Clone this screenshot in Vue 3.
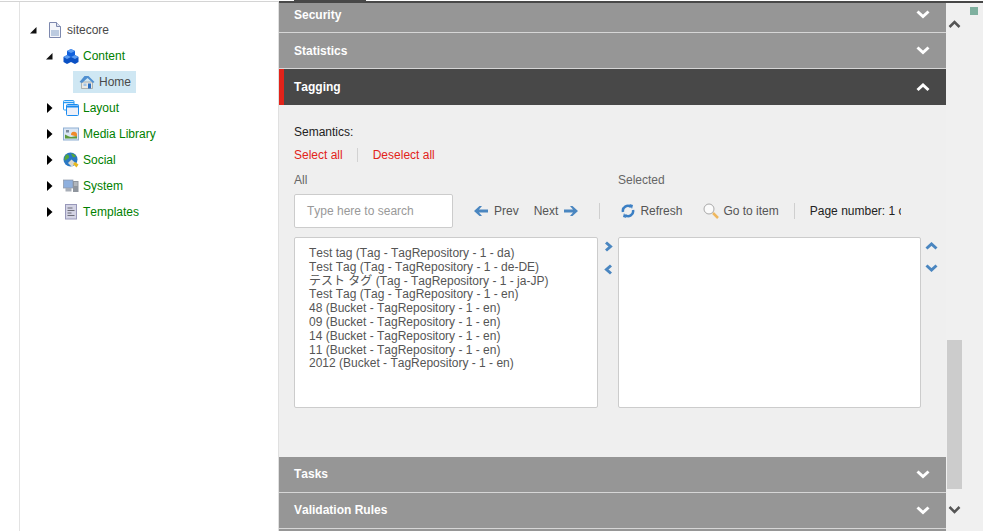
<template>
  <div class="page">
    <!-- content tree -->
    <aside class="tree-pane">
      <div class="gutter"></div>
      <div class="tree">
        <div class="node root">
          <svg class="twisty" viewBox="0 0 17 26"><path d="M0 16.500h6.500v-6.500z" fill="#111" /></svg>
          <svg class="icon" viewBox="0 0 16 16">
            <path d="M2.500 .5h7l4 4v11h-11z" fill="#f4f6fa" stroke="#7d88ae" />
            <path d="M9.500 .5v4h4" fill="#dfe4f0" stroke="#7d88ae" />
            <rect x="4" y="8" width="8" height="6" fill="#bccbe0" />
          </svg>
          <span class="label plain">sitecore</span>
        </div>
        <div class="node">
          <svg class="twisty" viewBox="0 0 17 26"><path d="M0 16.500h6.500v-6.500z" fill="#111" /></svg>
          <svg class="icon" viewBox="0 0 16 16">
            <path d="M4 3l4-2 4 2v5l-4 2-4-2z" fill="#1160dc" />
            <path d="M4 3l4 2 4-2-4-2z" fill="#5c9cf2" />
            <path d="M.5 9l3.500-2 4 2v5l-4 2-3.500-2z" fill="#0a50c4" />
            <path d="M.5 9l3.500 2 4-2-4-2z" fill="#5c9cf2" />
            <path d="M8 9l4-2 3.500 2v5l-3.500 2-4-2z" fill="#0a50c4" />
            <path d="M8 9l4 2 3.500-2-3.500-2z" fill="#5c9cf2" />
          </svg>
          <span class="label">Content</span>
        </div>
        <div class="node home-row">
          <div class="selected">
            <svg class="icon" viewBox="0 0 16 16">
              <path d="M2.500 8h11v6.500h-11z" fill="#e9e9e4" stroke="#9a9a94" stroke-width=".7" />
              <path d="M.5 8l5-6h4l6 6-1.500 1-5.500-5-5.500 5z" fill="#4f8fd0" />
              <rect x="9" y="9.500" width="3" height="5" fill="#2b6fc0" />
              <rect x="4.500" y="9.500" width="3" height="2.500" fill="#9fc4e8" />
            </svg>
            <span class="label plain">Home</span>
          </div>
        </div>
        <div v-for="item in collapsed" :key="item" class="node">
          <svg class="twisty" viewBox="0 0 17 26"><path d="M1 8l5.500 5-5.500 5z" fill="#000" /></svg>
          <svg v-if="item === 'Layout'" class="icon" viewBox="0 0 16 16">
            <rect x=".5" y=".5" width="10.500" height="9.500" rx="1" fill="#fff" stroke="#2b9af3" />
            <path d="M.5 2.500h10.500" stroke="#2b9af3" stroke-width="1.500" />
            <rect x="3.500" y="4.500" width="12" height="11" rx="1" fill="#eef0f8" stroke="#1b8cf0" />
            <path d="M3.500 6.500h12" stroke="#1b8cf0" stroke-width="2" />
          </svg>
          <svg v-else-if="item === 'Media Library'" class="icon" viewBox="0 0 16 16">
            <rect x=".5" y="2" width="15" height="12" fill="#dbe6f4" stroke="#8fb0d4" />
            <path d="M2 12.500v-4l4 2 2 .5 6-1v2.500z" fill="#5c9a3c" />
            <path d="M8 9a3 3 0 0 1 6-.5v2z" fill="#f08a2c" />
            <rect x="3" y="4" width="3" height="2.500" fill="#7b8a9c" />
          </svg>
          <svg v-else-if="item === 'Social'" class="icon" viewBox="0 0 16 16">
            <circle cx="7.500" cy="7.500" r="7" fill="#2a78c4" />
            <path d="M3 3c2-1 3 0 3 2s-3 2-4 4c-1-2-.5-4 1-6zM8 1.500c2 0 4 1 5 3l-3 1z" fill="#55a83c" />
            <path d="M5 11l3.500-3.500 4 3.500-3.500 4z" fill="#d8d8d0" />
            <path d="M10 12l2-2 3.500 2.500-2 3z" fill="#e6b820" />
          </svg>
          <svg v-else-if="item === 'System'" class="icon" viewBox="0 0 16 16">
            <rect x=".5" y="2" width="9.500" height="8" fill="#8fb0de" stroke="#8c96a6" stroke-width=".7" />
            <rect x="2.500" y="10" width="6" height="3.500" fill="#a8aeb8" />
            <rect x="10" y="3" width="5.500" height="11" fill="#8f959e" />
            <path d="M11 5h3.500M11 7h3.500" stroke="#d2d6dc" />
          </svg>
          <svg v-else class="icon" viewBox="0 0 16 16">
            <rect x="2.500" y=".5" width="11" height="14.500" fill="#d3d3e4" stroke="#9898ba" />
            <path d="M4.500 4h5M4.500 6.500h7M4.500 9h4M4.500 11.500h7" stroke="#6d6d78" />
          </svg>
          <span class="label">{{ item }}</span>
        </div>
      </div>
    </aside>

    <!-- right hand editor -->
    <main class="editor">
      <div class="tab-strip"><div class="tab"></div></div>
      <div class="top-bar"></div>
      <div class="columns">
        <div class="sections">
          <div class="section-head first">
            <span>Security</span>
            <svg class="chev" viewBox="0 0 14 9"><path d="M1.500 1.500l5.500 5 5.500-5" /></svg>
          </div>
          <div class="section-head">
            <span>Statistics</span>
            <svg class="chev" viewBox="0 0 14 9"><path d="M1.500 1.500l5.500 5 5.500-5" /></svg>
          </div>
          <div class="section-head open">
            <span>Tagging</span>
            <svg class="chev" viewBox="0 0 14 9"><path d="M1.500 7l5.500-5 5.500 5" /></svg>
          </div>

          <div class="section-body">
            <div class="semantics">Semantics:</div>
            <div class="links">
              <a>Select all</a>
              <i class="link-sep"></i>
              <a>Deselect all</a>
            </div>
            <div class="col-labels">
              <span class="col-all">All</span>
              <span>Selected</span>
            </div>
            <div class="toolbar">
              <div class="search">Type here to search</div>
              <div class="pager">
                <svg class="arrow" viewBox="0 0 14 10"><path d="M5.500 0L0 5l5.500 5H8L5 6.500h9v-3H5L8 0z" /></svg>
                <span>Prev</span>
                <span class="next">Next</span>
                <svg class="arrow" viewBox="0 0 14 10"><path d="M8.500 0L14 5l-5.500 5H6l3-3.500H0v-3h9L6 0z" /></svg>
              </div>
              <i class="tool-sep first-sep"></i>
              <div class="tool refresh">
                <svg class="tool-icon" viewBox="0 0 14 14">
                  <path d="M2 8a5 5 0 0 1 8-5" fill="none" stroke="#3b7fc4" stroke-width="2.5" />
                  <path d="M12 6a5 5 0 0 1-8 5" fill="none" stroke="#3b7fc4" stroke-width="2.5" />
                  <path d="M8.500 0l3.500 1 -1 4zM5.500 14l-3.500-1 1-4z" fill="#3b7fc4" />
                </svg>
                <span>Refresh</span>
              </div>
              <div class="tool goto">
                <svg class="mag" viewBox="0 0 16 16">
                  <circle cx="6" cy="6" r="5" fill="#fbfbfb" stroke="#a9a9a9" />
                  <path d="M10 10l5 5" stroke="#eeb75e" stroke-width="2.500" />
                </svg>
                <span>Go to item</span>
              </div>
              <i class="tool-sep"></i>
              <div class="page-number">Page number: 1 of 1</div>
            </div>
            <div class="lists">
              <ul class="list-box">
                <li v-for="tag in tags" :key="tag">{{ tag }}</li>
              </ul>
              <div class="move">
                <svg class="small-chev" viewBox="0 0 9 11"><path d="M2 1.500l4.500 4-4.500 4" /></svg>
                <svg class="small-chev" viewBox="0 0 9 11"><path d="M7 1.500l-4.500 4 4.500 4" /></svg>
              </div>
              <div class="list-box selected-box"></div>
              <div class="order">
                <svg class="order-chev" viewBox="0 0 13 8"><path d="M1.500 6.500l5-4.500 5 4.500" /></svg>
                <svg class="order-chev" viewBox="0 0 13 8"><path d="M1.500 1.500l5 4.500 5-4.500" /></svg>
              </div>
            </div>
          </div>

          <div class="section-head lower">
            <span>Tasks</span>
            <svg class="chev" viewBox="0 0 14 9"><path d="M1.500 1.500l5.500 5 5.500-5" /></svg>
          </div>
          <div class="section-head lower">
            <span>Validation Rules</span>
            <svg class="chev" viewBox="0 0 14 9"><path d="M1.500 1.500l5.500 5 5.500-5" /></svg>
          </div>
          <div class="section-head"></div>
        </div>

        <div class="scroll-col">
          <svg class="scroll-chev" viewBox="0 0 13 9"><path d="M1.500 7l5-5 5 5" /></svg>
          <div class="thumb"></div>
          <svg class="scroll-chev down" viewBox="0 0 13 9"><path d="M1.500 2l5 5 5-5" /></svg>
          <div class="marker"></div>
        </div>
      </div>
    </main>
  </div>
</template>

<script setup>
const collapsed = ['Layout', 'Media Library', 'Social', 'System', 'Templates']

const tags = [
  'Test tag (Tag - TagRepository - 1 - da)',
  'Test Tag (Tag - TagRepository - 1 - de-DE)',
  'テスト タグ (Tag - TagRepository - 1 - ja-JP)',
  'Test Tag (Tag - TagRepository - 1 - en)',
  '48 (Bucket - TagRepository - 1 - en)',
  '09 (Bucket - TagRepository - 1 - en)',
  '14 (Bucket - TagRepository - 1 - en)',
  '11 (Bucket - TagRepository - 1 - en)',
  '2012 (Bucket - TagRepository - 1 - en)'
]
</script>

<style>
html, body {
  margin: 0;
  overflow: hidden;
  background: #fff;
}
</style>

<style scoped>
.page {
  display: flex;
  width: 983px;
  height: 531px;
  overflow: hidden;
  font-family: "Liberation Sans", "Noto Sans CJK JP", sans-serif;
  font-size: 12px;
  font-kerning: none;
  color: #444;
}

/* tree */
.tree-pane {
  display: flex;
  width: 279px;
  flex: none;
  box-sizing: border-box;
  margin-top: 1px;
  border-top: 1px solid #d4d4d4;
  border-right: 1px solid #e0e0e0;
}

.gutter {
  width: 19px;
  flex: none;
  border-right: 1px solid #e3e3e3;
}

.tree {
  padding: 15px 0 0 16px;
  flex: 1;
}

.node {
  display: flex;
  align-items: center;
  height: 26px;
  padding-left: 10px;
}

.node.root {
  padding-left: 0;
  margin-left: -6px;
}

.twisty {
  width: 17px;
  height: 26px;
  flex: none;
}

.icon {
  width: 16px;
  height: 16px;
  flex: none;
}

.label {
  margin-left: 4px;
  color: #008000;
  white-space: nowrap;
}

.label.plain {
  color: #4a4a4a;
}

.node.home-row {
  padding-left: 37px;
}

.selected {
  display: flex;
  align-items: center;
  height: 22px;
  padding: 0 0 0 6px;
  width: 57px;
  background: #cfe7f3;
}

/* editor */
.editor {
  flex: 1;
  min-width: 0;
  display: flex;
  flex-direction: column;
}

.tab-strip {
  height: 1px;
  padding-left: 15px;
}

.tab {
  width: 72px;
  height: 1px;
  background: #484848;
}

.top-bar {
  height: 2px;
  background: #484848;
}

.columns {
  flex: 1;
  display: flex;
  min-height: 0;
}

.sections {
  width: 667px;
  flex: none;
  background: #efefef;
}

.section-head {
  display: flex;
  align-items: center;
  justify-content: space-between;
  box-sizing: border-box;
  height: 36px;
  padding: 0 16px 0 15px;
  background: #969696;
  border-bottom: 1px solid #d6d6d6;
  color: #fff;
  font-weight: bold;
}

.section-head.first {
  height: 30px;
  padding-bottom: 6px;
}

.section-head.open {
  background: #484848;
  border-bottom: 0;
  border-left: 5px solid #e2231a;
  padding-left: 10px;
}

.section-head.lower span {
  margin-bottom: 2px;
}

.chev {
  width: 14px;
  height: 9px;
  fill: none;
  stroke: #fff;
  stroke-width: 3;
}

.section-body {
  box-sizing: border-box;
  height: 352px;
  padding: 20px 0 0 15px;
  color: #555;
}

.semantics {
  color: #222;
  line-height: 14px;
}

.links {
  display: flex;
  align-items: center;
  margin-top: 9px;
  height: 14px;
  color: #e2231a;
}

.link-sep {
  width: 1px;
  height: 14px;
  background: #d2d2d2;
  margin: 0 15px 0 14px;
}

.col-labels {
  display: flex;
  margin-top: 11px;
  line-height: 14px;
  color: #666;
}

.col-all {
  width: 324px;
}

.toolbar {
  display: flex;
  align-items: center;
  margin-top: 7px;
  height: 34px;
  width: 608px;
  overflow: hidden;
}

.search {
  box-sizing: border-box;
  width: 159px;
  height: 34px;
  flex: none;
  padding-left: 12px;
  line-height: 32px;
  background: #fff;
  border: 1px solid #ccc;
  border-radius: 2px;
  color: #999;
}

.pager {
  display: flex;
  align-items: center;
  margin-left: 21px;
  flex: none;
}

.pager span {
  margin-left: 6px;
}

.pager .next {
  margin-left: 15px;
  margin-right: 6px;
}

.arrow {
  width: 14px;
  height: 10px;
  fill: #4a86c0;
}

.tool-sep {
  width: 1px;
  height: 16px;
  flex: none;
  background: #cfcfcf;
  margin-left: 15px;
}

.tool-sep.first-sep {
  margin-left: 21px;
}

.tool {
  display: flex;
  align-items: center;
  flex: none;
}

.refresh {
  margin-left: 21px;
}

.tool-icon {
  width: 14px;
  height: 14px;
  margin-right: 5px;
}

.goto {
  margin-left: 21px;
}

.mag {
  width: 16px;
  height: 16px;
  margin-right: 4px;
}

.page-number {
  margin-left: 15px;
  width: 91px;
  flex: none;
  overflow: hidden;
  white-space: nowrap;
  color: #222;
}

.lists {
  display: flex;
  margin-top: 9px;
}

.list-box {
  box-sizing: border-box;
  width: 304px;
  height: 171px;
  margin: 0;
  padding: 9px 0 0 14px;
  list-style: none;
  background: #fff;
  border: 1px solid #ccc;
  border-radius: 2px;
  color: #555;
}

.list-box li {
  height: 13.8px;
  line-height: 13.8px;
}

.selected-box {
  width: 303px;
}

.move {
  width: 20px;
  display: flex;
  flex-direction: column;
  align-items: center;
  gap: 12px;
  padding-top: 4px;
}

.small-chev {
  width: 9px;
  height: 11px;
  fill: none;
  stroke: #4a86c0;
  stroke-width: 3;
}

.order {
  width: 20px;
  display: flex;
  flex-direction: column;
  align-items: center;
  gap: 14px;
  padding-top: 5px;
}

.order-chev {
  width: 13px;
  height: 8px;
  fill: none;
  stroke: #4a86c0;
  stroke-width: 3;
}

/* scroller */
.scroll-col {
  flex: 1;
  position: relative;
  display: flex;
  flex-direction: column;
  padding: 17px 0 0 1px;
  background: #f0f0f0;
}

.scroll-chev {
  width: 13px;
  height: 9px;
  margin-left: 1px;
  flex: none;
  fill: none;
  stroke: #555;
  stroke-width: 2.5;
}

.thumb {
  width: 15px;
  height: 149px;
  margin-top: 311px;
  background: #ccc;
}

.scroll-chev.down {
  margin-top: 16px;
}

.marker {
  position: absolute;
  top: 4px;
  right: 5px;
  width: 8px;
  height: 8px;
  background: #7fb09f;
}
</style>
